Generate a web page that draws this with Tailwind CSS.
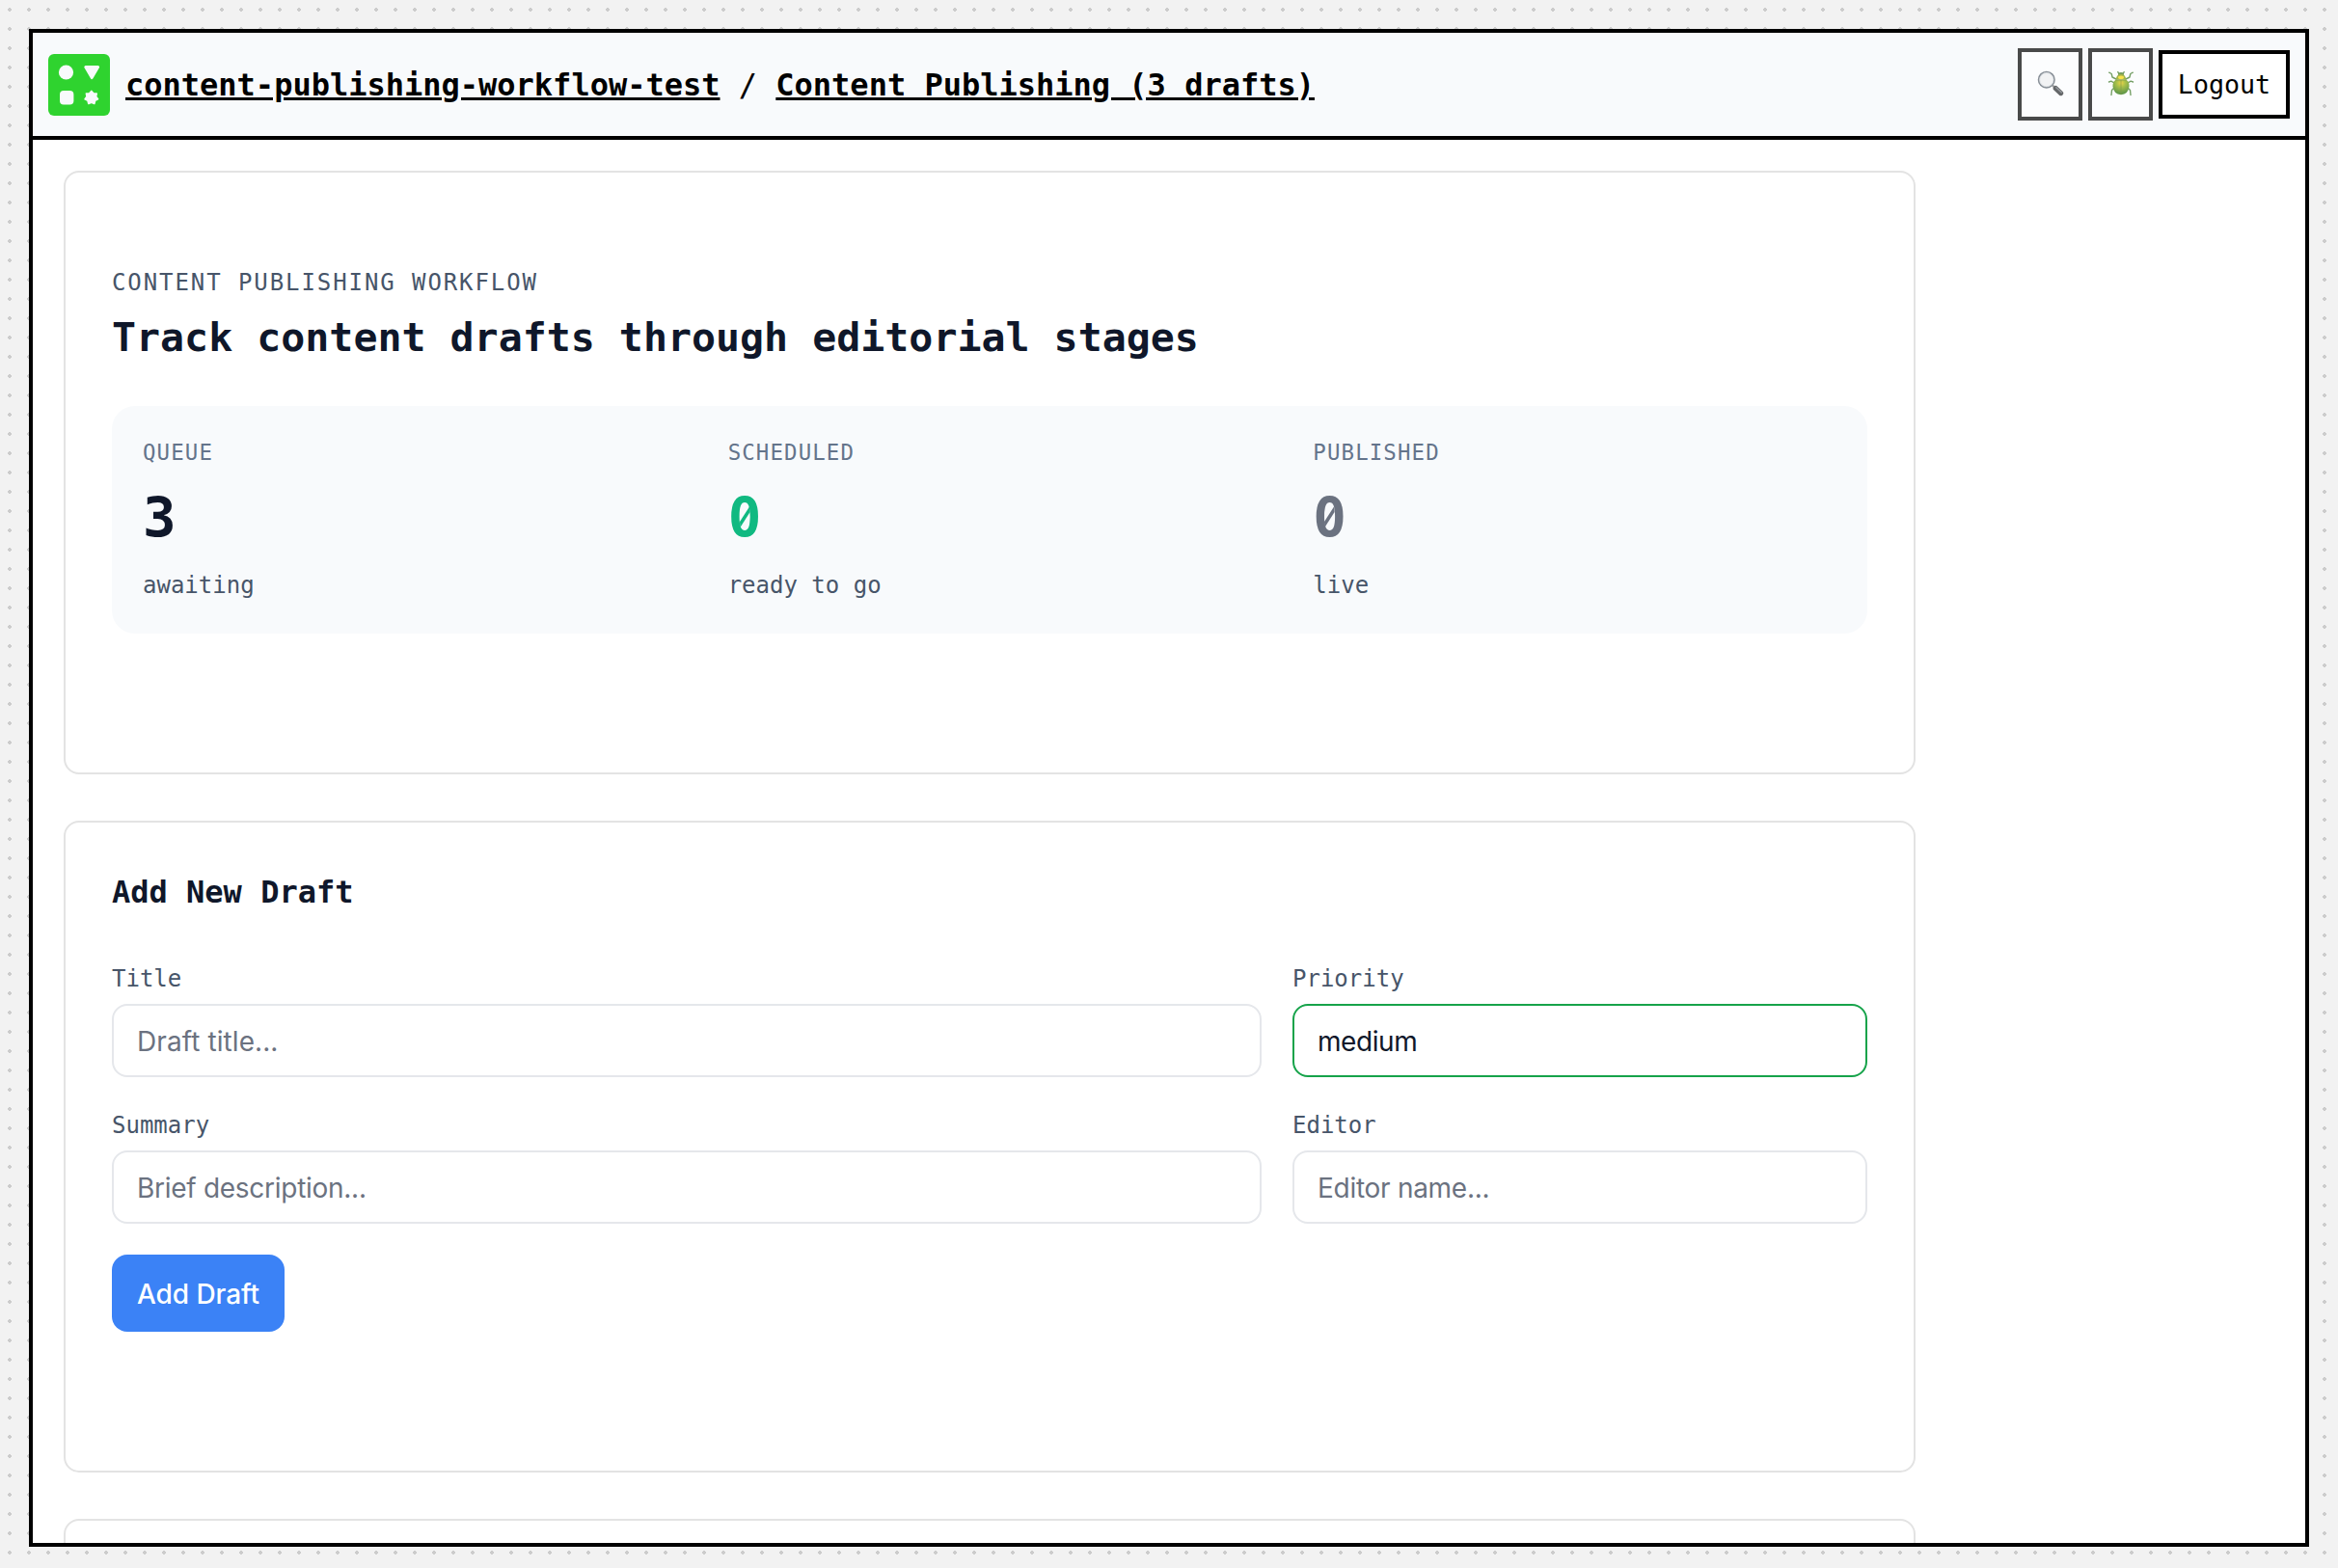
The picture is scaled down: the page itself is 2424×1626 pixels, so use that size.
<!DOCTYPE html>
<html lang="en">
<head>
<meta charset="utf-8">
<title>Content Publishing (3 drafts)</title>
<script src="https://cdn.jsdelivr.net/npm/@tailwindcss/browser@4"></script>
</head>
<body class="h-[1626px] w-[2424px] overflow-hidden bg-[#f2f2f2] bg-[radial-gradient(circle_at_10px_10px,#cccccc_2px,transparent_2px)] bg-[length:20px_20px] px-[30px] pt-[30px] font-['DejaVu_Sans_Mono',monospace] text-black">
<div class="flex h-[1574px] flex-col overflow-hidden border-4 border-black bg-white">
  <header class="flex h-[111px] shrink-0 items-center border-b-4 border-black bg-[#f8fafc] px-4">
    <svg class="mt-px h-16 w-16 shrink-0" viewBox="0 0 64 64">
      <rect width="64" height="64" rx="6" fill="#2fd32f"/>
      <g fill="#f8fafc" stroke="#f8fafc" stroke-linejoin="round">
        <circle cx="18.5" cy="19" r="7.6" stroke="none"/>
        <path d="M38.8 13.5H51.6L45.2 24.6Z" stroke-width="3"/>
        <rect x="12" y="38" width="14.4" height="14.6" rx="4" stroke="none"/>
        <path transform="translate(44.8 45.3)" stroke-width="1.6" d="M0-6.9L2.13-4.41L5.4-4.3L4.78-1.09L6.73 1.54L3.83 3.05L2.99 6.22L0 4.9L-2.99 6.22L-3.83 3.05L-6.73 1.54L-4.78-1.09L-5.4-4.3L-2.13-4.41Z"/>
      </g>
    </svg>
    <nav class="ml-4 whitespace-pre text-[32px] leading-10"><a class="font-bold underline decoration-3 underline-offset-2">content-publishing-workflow-test</a> / <a class="font-bold underline decoration-3 underline-offset-2">Content Publishing (3 drafts)</a></nav>
    <div class="ml-auto flex items-center gap-1.5">
      <button class="flex h-[75px] w-[67px] items-center justify-center border-4 border-black bg-white opacity-70" aria-label="Search">
        <svg class="-mt-px h-7 w-7" viewBox="0 0 28 28" fill="none">
          <path d="M16 15.5L19.5 18.8" stroke="#777" stroke-width="2.4"/>
          <path d="M19.3 18.6L24.6 23.6" stroke="#26292c" stroke-width="5.2" stroke-linecap="round"/>
          <path d="M19.8 17.8L25.3 22.7" stroke="#70757a" stroke-width="1.3" stroke-linecap="round"/>
          <circle cx="9.8" cy="9.7" r="8.2" fill="#f0f1f2" stroke="#59636d" stroke-width="1.7"/>
          <circle cx="9.8" cy="9.7" r="7.1" stroke="#c9ced2" stroke-width=".8"/>
        </svg>
      </button>
      <button class="flex h-[75px] w-[67px] items-center justify-center border-4 border-black bg-white opacity-70" aria-label="Debug">
        <svg class="-mt-px h-7 w-7" viewBox="0 0 28 28" fill="none">
          <defs>
            <radialGradient id="shell" cx=".5" cy=".2" r=".7"><stop offset="0" stop-color="#e8c400"/><stop offset=".4" stop-color="#86a800"/><stop offset="1" stop-color="#267200"/></radialGradient>
          </defs>
          <g stroke="#3f7a28" stroke-width="1.4" stroke-linecap="round" stroke-linejoin="round">
            <path d="M9 9L5 7L4.200 3.500L1.700 2.200M19 9L23 7L23.800 3.500L26.300 2.200"/>
            <path d="M7 13L3.800 11.200L1.500 12M21 13L24.200 11.200L26.500 12"/>
            <path d="M7 18L4.500 20.500L4 25.500M21 18L23.500 20.500L24 25.500"/>
            <path d="M12 3.500L10.800 1.700M16 3.500L17.200 1.700"/>
          </g>
          <ellipse cx="14" cy="4" rx="3" ry="2" fill="#3b7414"/>
          <path d="M8.800 9.800Q9 4 14 4T19.200 9.800Z" fill="#7f9800"/>
          <ellipse cx="14" cy="7.300" rx="3" ry="1.900" fill="#f8d800"/>
          <path d="M8.200 10H19.800Q22.700 12 22.500 16.500Q21.500 25 14 25.200Q6.500 25 5.500 16.500Q5.300 12 8.200 10Z" fill="url(#shell)"/>
          <path d="M8.500 10H19.500M14 10V25" stroke="#4e7000" stroke-width=".7"/>
        </svg>
      </button>
      <button class="h-[71px] w-[136px] border-4 border-black bg-white text-[26.67px] leading-8">Logout</button>
    </div>
  </header>

  <main class="flex min-h-0 flex-1 flex-col gap-12 overflow-hidden px-8 pt-8">
    <section class="h-[626px] w-[1920px] shrink-0 rounded-2xl border-2 border-[#e3e3e3] px-12 pt-24">
      <p class="text-2xl leading-9 tracking-[0.08em] text-[#475569]">CONTENT PUBLISHING WORKFLOW</p>
      <h1 class="mt-3.5 text-[41.6px] leading-[50px] font-bold text-[#0f172a]">Track content drafts through editorial stages</h1>
      <div class="mt-[46px] grid grid-cols-3 gap-16 rounded-3xl bg-[#f8fafc] p-8">
        <div>
          <p class="text-[22.4px] leading-8 tracking-[0.05em] text-[#64748b]">QUEUE</p>
          <p class="mt-[21px] text-[57.6px] leading-16 font-bold text-[#0f172a]">3</p>
          <p class="mt-[19px] text-2xl leading-9 text-[#475569]">awaiting</p>
        </div>
        <div>
          <p class="text-[22.4px] leading-8 tracking-[0.05em] text-[#64748b]">SCHEDULED</p>
          <p class="relative mt-[21px] text-[57.6px] leading-16 font-bold text-[#10b981]">0
            <!-- slashed-zero counter -->
            <svg class="absolute top-0 left-0 h-16 w-[35px]" viewBox="0 0 35 64"><ellipse cx="17.300" cy="30" rx="5" ry="13" fill="#f8fafc"/><path d="M12 35L22.300 19L22.600 25L12.400 41Z" fill="currentColor"/></svg>
          </p>
          <p class="mt-[19px] text-2xl leading-9 text-[#475569]">ready to go</p>
        </div>
        <div>
          <p class="text-[22.4px] leading-8 tracking-[0.05em] text-[#64748b]">PUBLISHED</p>
          <p class="relative mt-[21px] text-[57.6px] leading-16 font-bold text-[#6b7280]">0
            <svg class="absolute top-0 left-0 h-16 w-[35px]" viewBox="0 0 35 64"><ellipse cx="17.300" cy="30" rx="5" ry="13" fill="#f8fafc"/><path d="M12 35L22.300 19L22.600 25L12.400 41Z" fill="currentColor"/></svg>
          </p>
          <p class="mt-[19px] text-2xl leading-9 text-[#475569]">live</p>
        </div>
      </div>
    </section>

    <section class="h-[676px] w-[1920px] shrink-0 rounded-2xl border-2 border-[#e3e3e3] px-12 pt-[52px]">
      <h2 class="text-[32px] leading-10 font-bold text-[#0f172a]">Add New Draft</h2>
      <form class="mt-[52px] grid grid-cols-[2fr_1fr] gap-8">
        <label class="flex flex-col gap-2 text-2xl leading-9 text-[#475569]">Title
          <input class="h-[76px] w-full rounded-2xl border-2 border-[#e5e7eb] bg-white px-6 pt-0.5 font-[Inter,sans-serif] text-[28px] tracking-[0.003em] text-[#0f172a] placeholder:text-[#6b7280]" placeholder="Draft title...">
        </label>
        <label class="flex flex-col gap-2 text-2xl leading-9 text-[#475569]">Priority
          <input class="h-[76px] w-full rounded-2xl border-2 border-[#16a34a] bg-white px-6 pt-0.5 font-[Inter,sans-serif] text-[28px] tracking-[-0.015em] text-[#0f172a]" value="medium">
        </label>
        <label class="flex flex-col gap-2 text-2xl leading-9 text-[#475569]">Summary
          <input class="h-[76px] w-full rounded-2xl border-2 border-[#e5e7eb] bg-white px-6 pt-0.5 font-[Inter,sans-serif] text-[28px] tracking-[-0.01em] text-[#0f172a] placeholder:text-[#6b7280]" placeholder="Brief description...">
        </label>
        <label class="flex flex-col gap-2 text-2xl leading-9 text-[#475569]">Editor
          <input class="h-[76px] w-full rounded-2xl border-2 border-[#e5e7eb] bg-white px-6 pt-0.5 font-[Inter,sans-serif] text-[28px] tracking-[-0.01em] text-[#0f172a] placeholder:text-[#6b7280]" placeholder="Editor name...">
        </label>
        <button type="button" class="h-20 w-[179px] rounded-2xl bg-[#3b82f6] pt-px font-[Inter,sans-serif] text-[28px] font-medium tracking-[-0.003em] text-white">Add Draft</button>
      </form>
    </section>

    <section class="h-[626px] w-[1920px] shrink-0 rounded-2xl border-2 border-[#e3e3e3]"></section>
  </main>
</div>
</body>
</html>
